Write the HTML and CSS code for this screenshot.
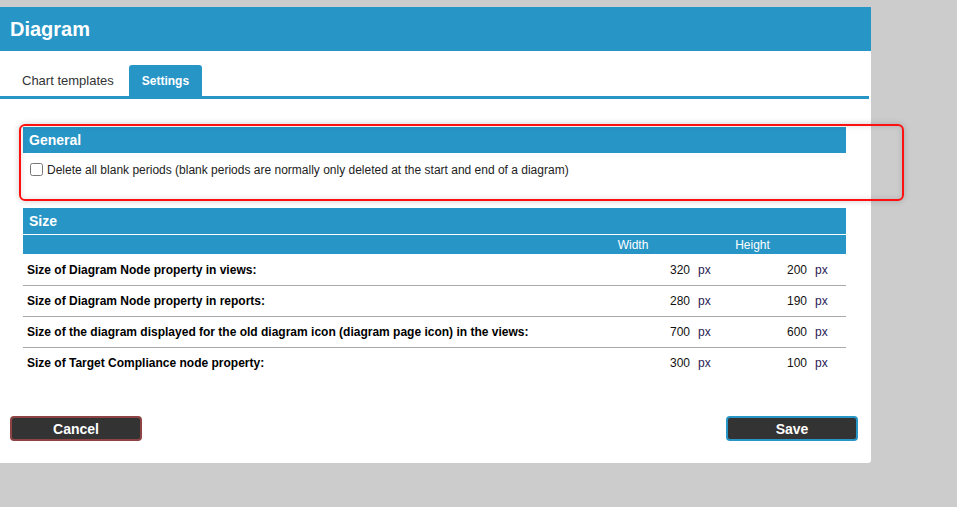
FILE: index.html
```html
<!DOCTYPE html>
<html lang="en">
<head>
    <meta charset="UTF-8">
    <title>Diagram</title>
    <link rel="stylesheet" href="styles.css">
</head>
<body>
    <div class="dialog">
        <div class="dialog-title">Diagram</div>

        <div class="tabs">
            <div class="tab">Chart templates</div>
            <div class="tab active">Settings</div>
        </div>

        <div class="content">
            <section class="panel general">
                <div class="panel-head">General</div>
                <label class="check-row">
                    <input type="checkbox" class="check">
                    <span>Delete all blank periods (blank periods are normally only deleted at the start and end of a diagram)</span>
                </label>
            </section>

            <section class="panel size">
                <div class="panel-head">Size</div>
                <div class="size-row size-sub">
                    <span></span>
                    <span class="sub-width">Width</span>
                    <span></span>
                    <span class="sub-height">Height</span>
                    <span></span>
                    <span></span>
                </div>
                <div class="size-row">
                    <span class="label">Size of Diagram Node property in views:</span>
                    <span class="val">320</span><span class="unit">px</span>
                    <span class="val">200</span><span class="unit">px</span>
                    <span></span>
                </div>
                <div class="size-row">
                    <span class="label">Size of Diagram Node property in reports:</span>
                    <span class="val">280</span><span class="unit">px</span>
                    <span class="val">190</span><span class="unit">px</span>
                    <span></span>
                </div>
                <div class="size-row">
                    <span class="label">Size of the diagram displayed for the old diagram icon (diagram page icon) in the views:</span>
                    <span class="val">700</span><span class="unit">px</span>
                    <span class="val">600</span><span class="unit">px</span>
                    <span></span>
                </div>
                <div class="size-row">
                    <span class="label">Size of Target Compliance node property:</span>
                    <span class="val">300</span><span class="unit">px</span>
                    <span class="val">100</span><span class="unit">px</span>
                    <span></span>
                </div>
            </section>
        </div>

        <div class="buttons">
            <button class="btn cancel">Cancel</button>
            <button class="btn save">Save</button>
        </div>
    </div>

    <!-- annotation frame drawn over the General panel -->
    <div class="highlight"></div>
</body>
</html>
```

FILE: styles.css
```css
body {
    margin: 0;
    background-color: #cccccc;
    font-family: "Liberation Sans", Arial, sans-serif;
    font-size: 12px;
    color: #111;
}

.dialog {
    margin-top: 7px;
    width: 871px;
    background-color: white;
    border-bottom-right-radius: 3px;
}

.dialog-title {
    height: 44px;
    line-height: 44px;
    padding-left: 10px;
    background-color: #2795c6;
    color: white;
    font-size: 20px;
    font-weight: bold;
}

.tabs {
    display: flex;
    gap: 3px;
    margin-right: 2px;
    padding: 14px 0 0 10px;
    border-bottom: 3px solid #2795c6;
}

.tab {
    height: 31px;
    line-height: 32px;
    padding: 0 12px;
    font-size: 13px;
    color: #333;
    border-radius: 3px 3px 0 0;
}

.tab.active {
    padding: 0 13px;
    background-color: #2795c6;
    color: white;
    font-size: 12px;
    font-weight: bold;
}

.content {
    padding: 28px 25px 0 23px;
}

.panel-head {
    height: 26px;
    line-height: 27px;
    padding-left: 6px;
    background-color: #2795c6;
    color: white;
    font-size: 14px;
    font-weight: bold;
}

.general {
    padding-bottom: 32px;
}

.check-row {
    display: flex;
    align-items: center;
    gap: 4px;
    padding: 10px 7px 0;
    height: 13px;
    color: #222;
}

.check {
    margin: 0;
    width: 13px;
    height: 13px;
}

.size-row {
    display: grid;
    grid-template-columns: 1fr 106px 28px 89px 28px 11px;
    align-items: center;
    height: 30px;
    border-bottom: 1px solid #aaaaaa;
}

.size-row:nth-child(3) {
    height: 31px;
}

.size-row:last-child {
    border-bottom: none;
}

.size-sub {
    height: 19px;
    border-top: 1px solid white;
    border-bottom: none;
    background-color: #2795c6;
    color: white;
}

.sub-width {
    text-align: center;
    padding-right: 8px;
}

.sub-height {
    text-align: center;
    padding-right: 20px;
}

.label {
    padding-left: 4px;
    font-weight: bold;
    color: #000;
}

.val {
    text-align: right;
    color: #111;
}

.unit {
    padding-left: 8px;
    color: #2a1a55;
}

.buttons {
    display: flex;
    justify-content: space-between;
    padding: 38px 13px 22px 10px;
}

.btn {
    width: 132px;
    height: 25px;
    border: 2px solid;
    border-radius: 4px;
    background-color: #333333;
    color: white;
    font-family: "Liberation Sans", Arial, sans-serif;
    font-size: 14px;
    font-weight: bold;
    padding: 0;
}

.cancel {
    border-color: #8e4444;
}

.save {
    border-color: #2795c6;
}

.highlight {
    position: absolute;
    left: 19px;
    top: 124px;
    width: 885px;
    height: 77px;
    box-sizing: border-box;
    border: 2px solid #ff1010;
    border-radius: 6px;
    box-shadow: 0 0 6px rgba(0, 0, 0, 0.2), inset 0 0 6px rgba(0, 0, 0, 0.12);
}
```
